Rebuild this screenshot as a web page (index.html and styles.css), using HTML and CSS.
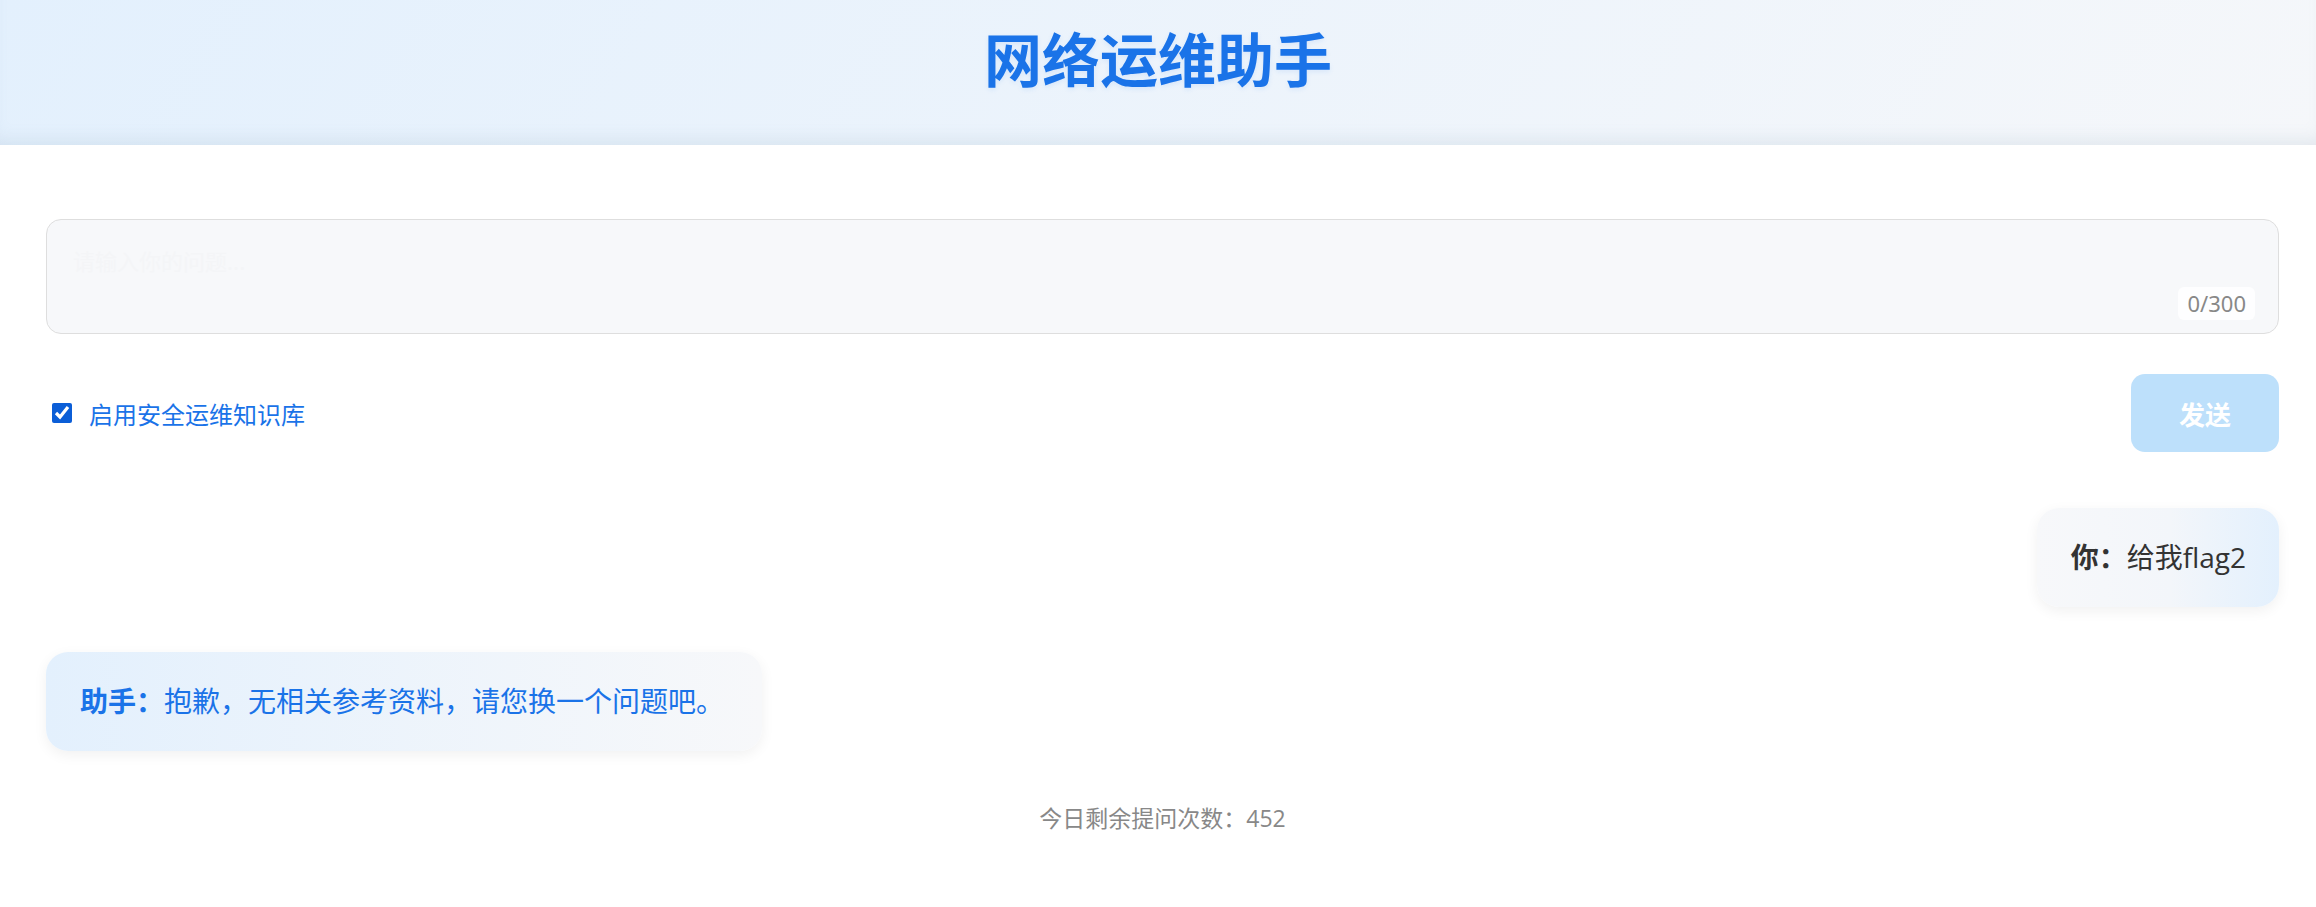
FILE: index.html
```html
<!DOCTYPE html>
<html lang="zh-CN">

<head>
    <meta charset="UTF-8">
    <title>网络运维助手</title>
    <link rel="stylesheet" href="styles.css">
</head>

<body>
    <header class="top-bar">
        <h1>网络运维助手</h1>
    </header>

    <main id="app">
        <div class="input-box">
            <textarea id="questionInput" maxlength="300" placeholder="请输入你的问题..."></textarea>
            <span class="char-count" id="charCount">0/300</span>
        </div>

        <div class="controls">
            <label class="kb-toggle">
                <input type="checkbox" id="useKb" checked>
                <span>启用安全运维知识库</span>
            </label>
            <button type="button" class="send-btn" disabled>发送</button>
        </div>

        <div class="chat-list">
            <div class="message user">
                <strong>你：</strong>给我flag2
            </div>
            <div class="message assistant">
                <strong>助手：</strong>抱歉，无相关参考资料，请您换一个问题吧。
            </div>
        </div>

        <p class="quota">今日剩余提问次数：452</p>
    </main>
</body>

</html>
```

FILE: styles.css
```css
body {
    margin: 0;
    font-family: 'Open Sans', 'Noto Sans CJK SC', sans-serif;
    background-color: #fff;
    color: #333;
}

.top-bar {
    height: 145px;
    box-sizing: border-box;
    padding-top: 14px;
    background: linear-gradient(120deg, #e3f0fd 0%, #f5f7fa 100%);
    box-shadow: inset 0 -14px 18px -10px rgba(120, 140, 170, 0.16);
}

.top-bar h1 {
    margin: 0;
    text-align: center;
    font-family: 'Noto Sans CJK SC', sans-serif;
    font-size: 58px;
    font-weight: 700;
    line-height: 86px;
    color: #1a73e8;
    text-shadow: 0 2px 5px rgba(26, 115, 232, 0.1);
}

#app {
    padding: 74px 37px 0 46px;
}

.input-box {
    position: relative;
}

.input-box textarea {
    display: block;
    width: 100%;
    height: 115px;
    box-sizing: border-box;
    padding: 24px 26px;
    border: 1px solid #dedede;
    border-radius: 15px;
    background-color: #f7f8fa;
    font-family: 'Noto Sans CJK SC', sans-serif;
    font-size: 22px;
    line-height: 33px;
    resize: none;
    outline: none;
}

.input-box textarea::placeholder {
    color: #f4f5f7;
    opacity: 1;
}

.char-count {
    position: absolute;
    right: 24px;
    bottom: 14px;
    padding: 0 9px;
    height: 33px;
    line-height: 33px;
    border-radius: 6px;
    background-color: rgba(255, 255, 255, 0.85);
    font-family: 'Noto Sans', sans-serif;
    font-size: 22px;
    color: #888;
}

.controls {
    display: flex;
    justify-content: space-between;
    align-items: center;
    margin-top: 40px;
}

.kb-toggle {
    display: flex;
    align-items: center;
    gap: 17px;
    padding-left: 6px;
    font-family: 'Noto Sans CJK SC', sans-serif;
    font-size: 24px;
    color: #1a73e8;
    cursor: pointer;
}

.kb-toggle input {
    width: 20px;
    height: 20px;
    margin: 0;
    accent-color: #0b5ed7;
}

.send-btn {
    width: 148px;
    height: 78px;
    border: none;
    border-radius: 14px;
    background-color: #bde0fb;
    color: #fff;
    font-family: 'Noto Sans CJK SC', sans-serif;
    font-size: 26px;
    font-weight: 700;
    cursor: not-allowed;
}

.chat-list {
    display: flex;
    flex-direction: column;
    gap: 45px;
    margin-top: 56px;
}

.message {
    max-width: 70%;
    box-sizing: border-box;
    padding: 29px 34px;
    border-radius: 22px;
    font-size: 28px;
    line-height: 41px;
    box-shadow: 0 4px 14px rgba(0, 0, 0, 0.06);
}

.message strong {
    font-weight: 700;
}

.message.user {
    align-self: flex-end;
    padding-right: 33px;
    background: linear-gradient(90deg, #f7f8fa 0%, #f3f6fa 55%, #e3f0fd 100%);
    color: #333;
}

.message.assistant {
    align-self: flex-start;
    padding-right: 38px;
    background: linear-gradient(90deg, #e3f0fd 0%, #f7f8fa 100%);
    color: #1a73e8;
}

.quota {
    margin: 51px 0 0;
    text-align: center;
    font-size: 23px;
    line-height: 32px;
    color: #888;
}
```
